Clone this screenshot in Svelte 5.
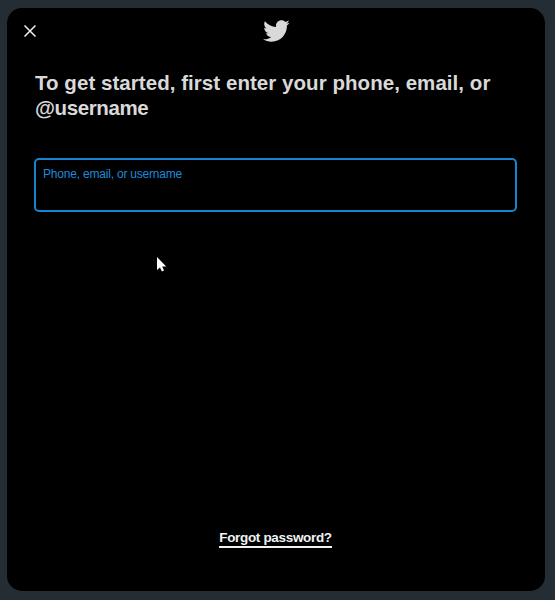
<script>
  let username = $state('');
</script>

<div class="backdrop">
  <main class="dialog" aria-labelledby="title">
    <header>
      <button class="close" aria-label="Close">
        <svg viewBox="0 0 12 12" width="12" height="12"><path d="M.5.5 11.5 11.5M11.5.5.5 11.5" /></svg>
      </button>
      <svg class="bird" viewBox="0 0 24 24" width="28" height="28" aria-hidden="true">
        <path d="M23.643 4.937c-.835.37-1.732.62-2.675.733.962-.576 1.7-1.49 2.048-2.578-.9.534-1.897.922-2.958 1.13-.85-.904-2.06-1.47-3.4-1.47-2.572 0-4.658 2.086-4.658 4.66 0 .364.042.718.12 1.06-3.873-.195-7.304-2.05-9.602-4.868-.4.69-.63 1.49-.63 2.342 0 1.616.823 3.043 2.072 3.878-.764-.025-1.482-.234-2.11-.583v.06c0 2.257 1.605 4.14 3.737 4.568-.392.106-.803.162-1.227.162-.3 0-.593-.028-.877-.082.593 1.85 2.313 3.198 4.352 3.234-1.595 1.25-3.604 1.995-5.786 1.995-.376 0-.747-.022-1.112-.065 2.062 1.323 4.51 2.093 7.14 2.093 8.57 0 13.255-7.098 13.255-13.254 0-.2-.005-.402-.014-.602.91-.658 1.7-1.477 2.323-2.41z" />
      </svg>
    </header>
    <h1 id="title"><span class="line">To get started, first enter your phone, email, or</span> <span class="line tight">@username</span></h1>
    <label class="field">
      <span>Phone, email, or username</span>
      <input type="text" bind:value={username} />
    </label>
    <footer><button class="forgot">Forgot password?</button></footer>
  </main>
  <svg class="cursor" viewBox="0 0 10 15" width="10" height="15" aria-hidden="true">
    <path d="M0 0V13L3 10.4 4.9 14.5 7 13.6 5.2 9.5H9.2z" />
  </svg>
</div>

<style>
  :global(body) { margin: 0; background: #242d34; }
  .backdrop {
    position: relative;
    box-sizing: border-box;
    height: 600px;
    padding: 7.5px 10.5px 9.5px 6.5px;
    background: #242d34;
    font-family: "Liberation Sans", Arial, sans-serif;
  }
  .dialog {
    box-sizing: border-box;
    height: 583px;
    display: flex;
    flex-direction: column;
    padding: 0 28.5px;
    border-radius: 15px;
    background: #000;
  }
  button { padding: 0; border: 0; background: none; font: inherit; }
  header {
    display: grid;
    grid-template-columns: 1fr 28px 1fr;
    height: 47px;
    margin: 0 -11px;
    align-items: center;
  }
  .close { width: 12px; height: 12px; display: flex; }
  .close path { fill: none; stroke: #eff3f4; stroke-width: 1.5; }
  .bird { fill: #d9d9d9; }
  h1 {
    margin: 15.5px 0 0;
    color: #d9d9d9;
    font-size: 20.5px;
    line-height: 25px;
    font-weight: 700;
  }
  .line { display: block; white-space: nowrap; letter-spacing: 0.05px; }
  .tight { letter-spacing: -0.4px; }
  .field {
    display: flex;
    flex-direction: column;
    box-sizing: border-box;
    height: 54px;
    margin: 38px -1px 0;
    padding: 7px 7px 0;
    border: 2px solid #1a83d0;
    border-radius: 5px;
    color: #1d8adb;
    font-size: 12px;
    line-height: 15px;
    letter-spacing: -0.2px;
  }
  input { min-width: 0; padding: 0; border: 0; outline: 0; background: transparent; color: #d9d9d9; font: inherit; }
  footer { display: flex; justify-content: center; margin: auto 0 42.5px; }
  .forgot {
    padding-top: 1px;
    color: #eff3f4;
    border-bottom: 2px solid #eff3f4;
    font-size: 13.5px;
    line-height: 17px;
    font-weight: 700;
    letter-spacing: -0.33px;
    white-space: nowrap;
  }
  .cursor { position: absolute; left: 157px; top: 257px; fill: #fff; }
</style>
